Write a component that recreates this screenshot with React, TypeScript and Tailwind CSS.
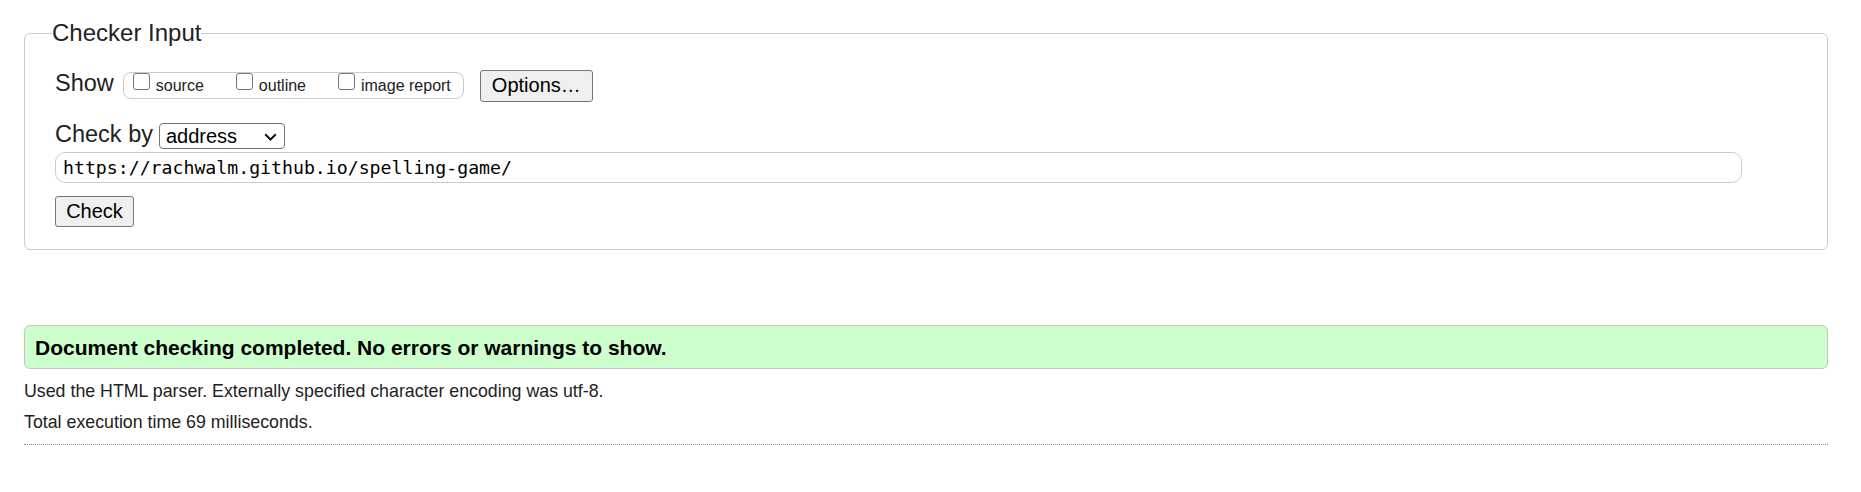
import React from 'react';

// Checkbox drawn as a Chrome-like unchecked box
function Box() {
  return <span className="block w-[17px] h-[17px] rounded-[3px] border border-[#767676] bg-white shrink-0" />;
}

function ShowOption({ label }: { label: string }) {
  return (
    <label className="flex items-start">
      <Box />
      <span className="ml-[6px] mt-[4px] text-[16px] leading-[18px] whitespace-nowrap">{label}</span>
    </label>
  );
}

export default function App() {
  return (
    <div className="min-h-screen bg-white pt-[19px] pl-[24px] pr-[33px] font-['Liberation_Sans',Arial,sans-serif] text-[#222]">
      {/* Checker input */}
      <fieldset className="border border-[#cccccc] rounded-[6px] pl-[30px] pr-[30px] pt-[23px] pb-[22px]">
        <legend className="-ml-[3px] text-[24px] leading-[28px] text-[#222]">Checker Input</legend>

        <div className="flex items-start">
          <span className="text-[23.5px] leading-[27px]">Show</span>
          <div className="ml-[9px] mt-[2px] h-[27px] flex items-start gap-[32px] pl-[9px] pr-[12px] border border-[#cccccc] rounded-[8px]">
            <ShowOption label="source" />
            <ShowOption label="outline" />
            <ShowOption label="image report" />
          </div>
          <button className="ml-[16px] w-[113px] h-[32px] text-[20px] leading-[22px] text-black bg-[#efefef] border border-[#767676] rounded-[3px] pb-[2px]">
            Options…
          </button>
        </div>

        <div className="mt-[19px] flex items-start">
          <span className="text-[23.5px] leading-[27px]">Check by</span>
          <div className="ml-[6px] mt-[2px] w-[126px] h-[26px] flex items-center justify-between pl-[6px] pr-[7px] border border-[#767676] rounded-[4px] bg-white text-black">
            <span className="text-[20px] leading-[22px]">address</span>
            <svg width="13" height="8" viewBox="0 0 13 8" className="mt-[1px]">
              <path d="M1.2 1.2 L6.5 6.5 L11.8 1.2" fill="none" stroke="#111" strokeWidth="2" />
            </svg>
          </div>
        </div>

        <div className="mt-[3px] w-[1687px] h-[31px] flex items-center pl-[7px] border border-[#cccccc] rounded-[10px] bg-white">
          <span className="font-['DejaVu_Sans_Mono','Liberation_Mono',monospace] text-[18.2px] leading-[22px] text-black">
            https://rachwalm.github.io/spelling-game/
          </span>
        </div>

        <button className="mt-[13px] w-[79px] h-[31px] text-[20px] leading-[22px] text-black bg-[#efefef] border border-[#767676] rounded-[3px] pb-[1px]">
          Check
        </button>
      </fieldset>

      {/* Results */}
      <div className="mt-[75px] border border-[#c6c6c6] rounded-[6px] bg-[#ccffcc] pl-[10px] pt-[10px] pb-[8px]">
        <p className="text-[21px] leading-[24px] font-bold text-black">
          Document checking completed. No errors or warnings to show.
        </p>
      </div>
      <p className="mt-[12px] text-[17.8px] leading-[20px]">
        Used the HTML parser. Externally specified character encoding was utf-8.
      </p>
      <p className="mt-[11px] text-[17.8px] leading-[20px]">Total execution time 69 milliseconds.</p>
      <hr className="mt-[12px] border-0 border-t border-dotted border-[#888]" />
    </div>
  );
}
